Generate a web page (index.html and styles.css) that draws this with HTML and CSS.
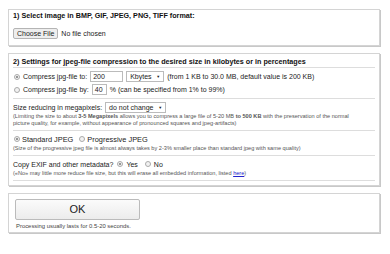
FILE: index.html
```html
<!DOCTYPE html>
<html lang="en">
<head>
  <meta charset="UTF-8">
  <title>Compress JPEG</title>
  <link rel="stylesheet" href="styles.css">
</head>
<body>
<div class="page">
  <div class="panel panel-file">
    <div class="panel-title">1) Select image in BMP, GIF, JPEG, PNG, TIFF format:</div>
    <div class="file-row">
      <span class="file-btn">Choose File</span>
      <span class="file-name">No file chosen</span>
    </div>
  </div>

  <div class="panel panel-settings">
    <div class="panel-title">2) Settings for jpeg-file compression to the desired size in kilobytes or in percentages</div>
    <div class="section section-size">
      <div class="row">
        <span class="radio checked"></span>
        <span class="label">Compress jpg-file to:</span>
        <span class="field field-size">200</span>
        <span class="select select-unit">Kbytes <i>&#9660;</i></span>
        <span>(from 1 KB to 30.0 MB, default value is 200 KB)</span>
      </div>
      <div class="row">
        <span class="radio"></span>
        <span class="label">Compress jpg-file by:</span>
        <span class="field field-pct">40</span>
        <span>% (can be specified from 1% to 99%)</span>
      </div>
    </div>
    <div class="section">
      <div class="row">
        <span>Size reducing in megapixels:</span>
        <span class="select select-mp">do not change <i>&#9660;</i></span>
      </div>
      <div class="note">(Limiting the size to about <b>3-5 Megapixels</b> allows you to compress a large file of 5-20 MB <b>to 500 KB</b> with the preservation of the normal<br>picture quality, for example, without appearance of pronounced squares and jpeg-artifacts)</div>
    </div>
    <div class="section">
      <div class="row row-big">
        <span class="radio checked"></span>
        <span>Standard JPEG</span>
        <span class="radio radio-gap"></span>
        <span>Progressive JPEG</span>
      </div>
      <div class="note">(Size of the progressive jpeg file is almost always takes by 2-3% smaller place than standard jpeg with same quality)</div>
    </div>
    <div class="section">
      <div class="row">
        <span>Copy EXIF and other metadata?</span>
        <span class="radio checked"></span>
        <span>Yes</span>
        <span class="radio radio-gap"></span>
        <span>No</span>
      </div>
      <div class="note">(«No» may little more reduce file size, but this will erase all embedded information, listed <a href="#">here</a>)</div>
    </div>
  </div>

  <div class="panel panel-submit">
    <div class="ok-btn">OK</div>
    <div class="hint">Processing usually lasts for 0.5-20 seconds.</div>
  </div>
</div>
</body>
</html>
```

FILE: styles.css
```css
* {
  margin: 0;
  padding: 0;
  box-sizing: border-box;
}

body {
  font-family: "Liberation Sans", Arial, sans-serif;
  font-size: 7px;
  color: #222;
  background: #fff;
}

.page {
  padding: 9px 10px 0 8px;
}

.panel {
  border: 1px solid #d4d4d4;
  box-shadow: 1px 1px 0 #c8c8c8;
  padding: 1px 4px 0 4px;
  margin-bottom: 7px;
}

.panel-title {
  font-weight: bold;
  font-size: 7.2px;
  line-height: 10px;
  height: 10px;
  color: #111;
}

.panel-file {
  height: 37px;
}

.file-row {
  display: flex;
  align-items: center;
  gap: 3px;
  margin-top: 7px;
}

.file-btn {
  border: 1px solid #b4b4b4;
  border-radius: 2px;
  background: #eee;
  padding: 0 3px;
  line-height: 9px;
}

.panel-settings {
  height: 133px;
}

.panel-settings .panel-title {
  border-bottom: 1px solid #ddd;
  height: 13px;
  line-height: 12px;
  padding-top: 1px;
}

.section {
  border-bottom: 1px solid #ddd;
  padding: 2px 0 3px;
}

.section-size {
  padding: 2px 0 2px;
}

.section-size .row {
  height: 13px;
}

.row {
  display: flex;
  align-items: center;
  gap: 3px;
  height: 12px;
}

.row-big {
  font-size: 7.4px;
  gap: 2px;
}

.radio {
  width: 6px;
  height: 6px;
  border-radius: 50%;
  border: 1px solid #aaa;
  background: #f2f2f2;
  margin-left: 1px;
  position: relative;
}

.radio-gap {
  margin-left: 4px;
}

.radio.checked::after {
  content: "";
  position: absolute;
  left: 1px;
  top: 1px;
  width: 2px;
  height: 2px;
  border-radius: 50%;
  background: #777;
}

.field {
  border: 1px solid #bbb;
  height: 11px;
  line-height: 9px;
  padding: 0 2px;
}

.field-size {
  width: 33px;
}

.field-pct {
  width: 15px;
}

.select {
  border: 1px solid #bbb;
  height: 11px;
  line-height: 9px;
  padding: 0 3px;
  display: flex;
  justify-content: space-between;
  align-items: center;
}

.select i {
  font-style: normal;
  font-size: 4px;
}

.select-unit {
  width: 38px;
}

.select-mp {
  width: 61px;
}

.note {
  font-size: 5.6px;
  color: #555;
  line-height: 7px;
  white-space: nowrap;
}

.note a {
  color: #22c;
}

.panel-submit {
  height: 40px;
  padding: 5px 6px 0;
}

.ok-btn {
  width: 125px;
  height: 21px;
  border: 1px solid #bbb;
  border-radius: 2px;
  background: linear-gradient(#fbfbfb, #ececec);
  font-size: 11px;
  line-height: 19px;
  text-align: center;
}

.hint {
  font-size: 5.9px;
  color: #444;
  margin-top: 3px;
  padding-left: 1px;
}
```
